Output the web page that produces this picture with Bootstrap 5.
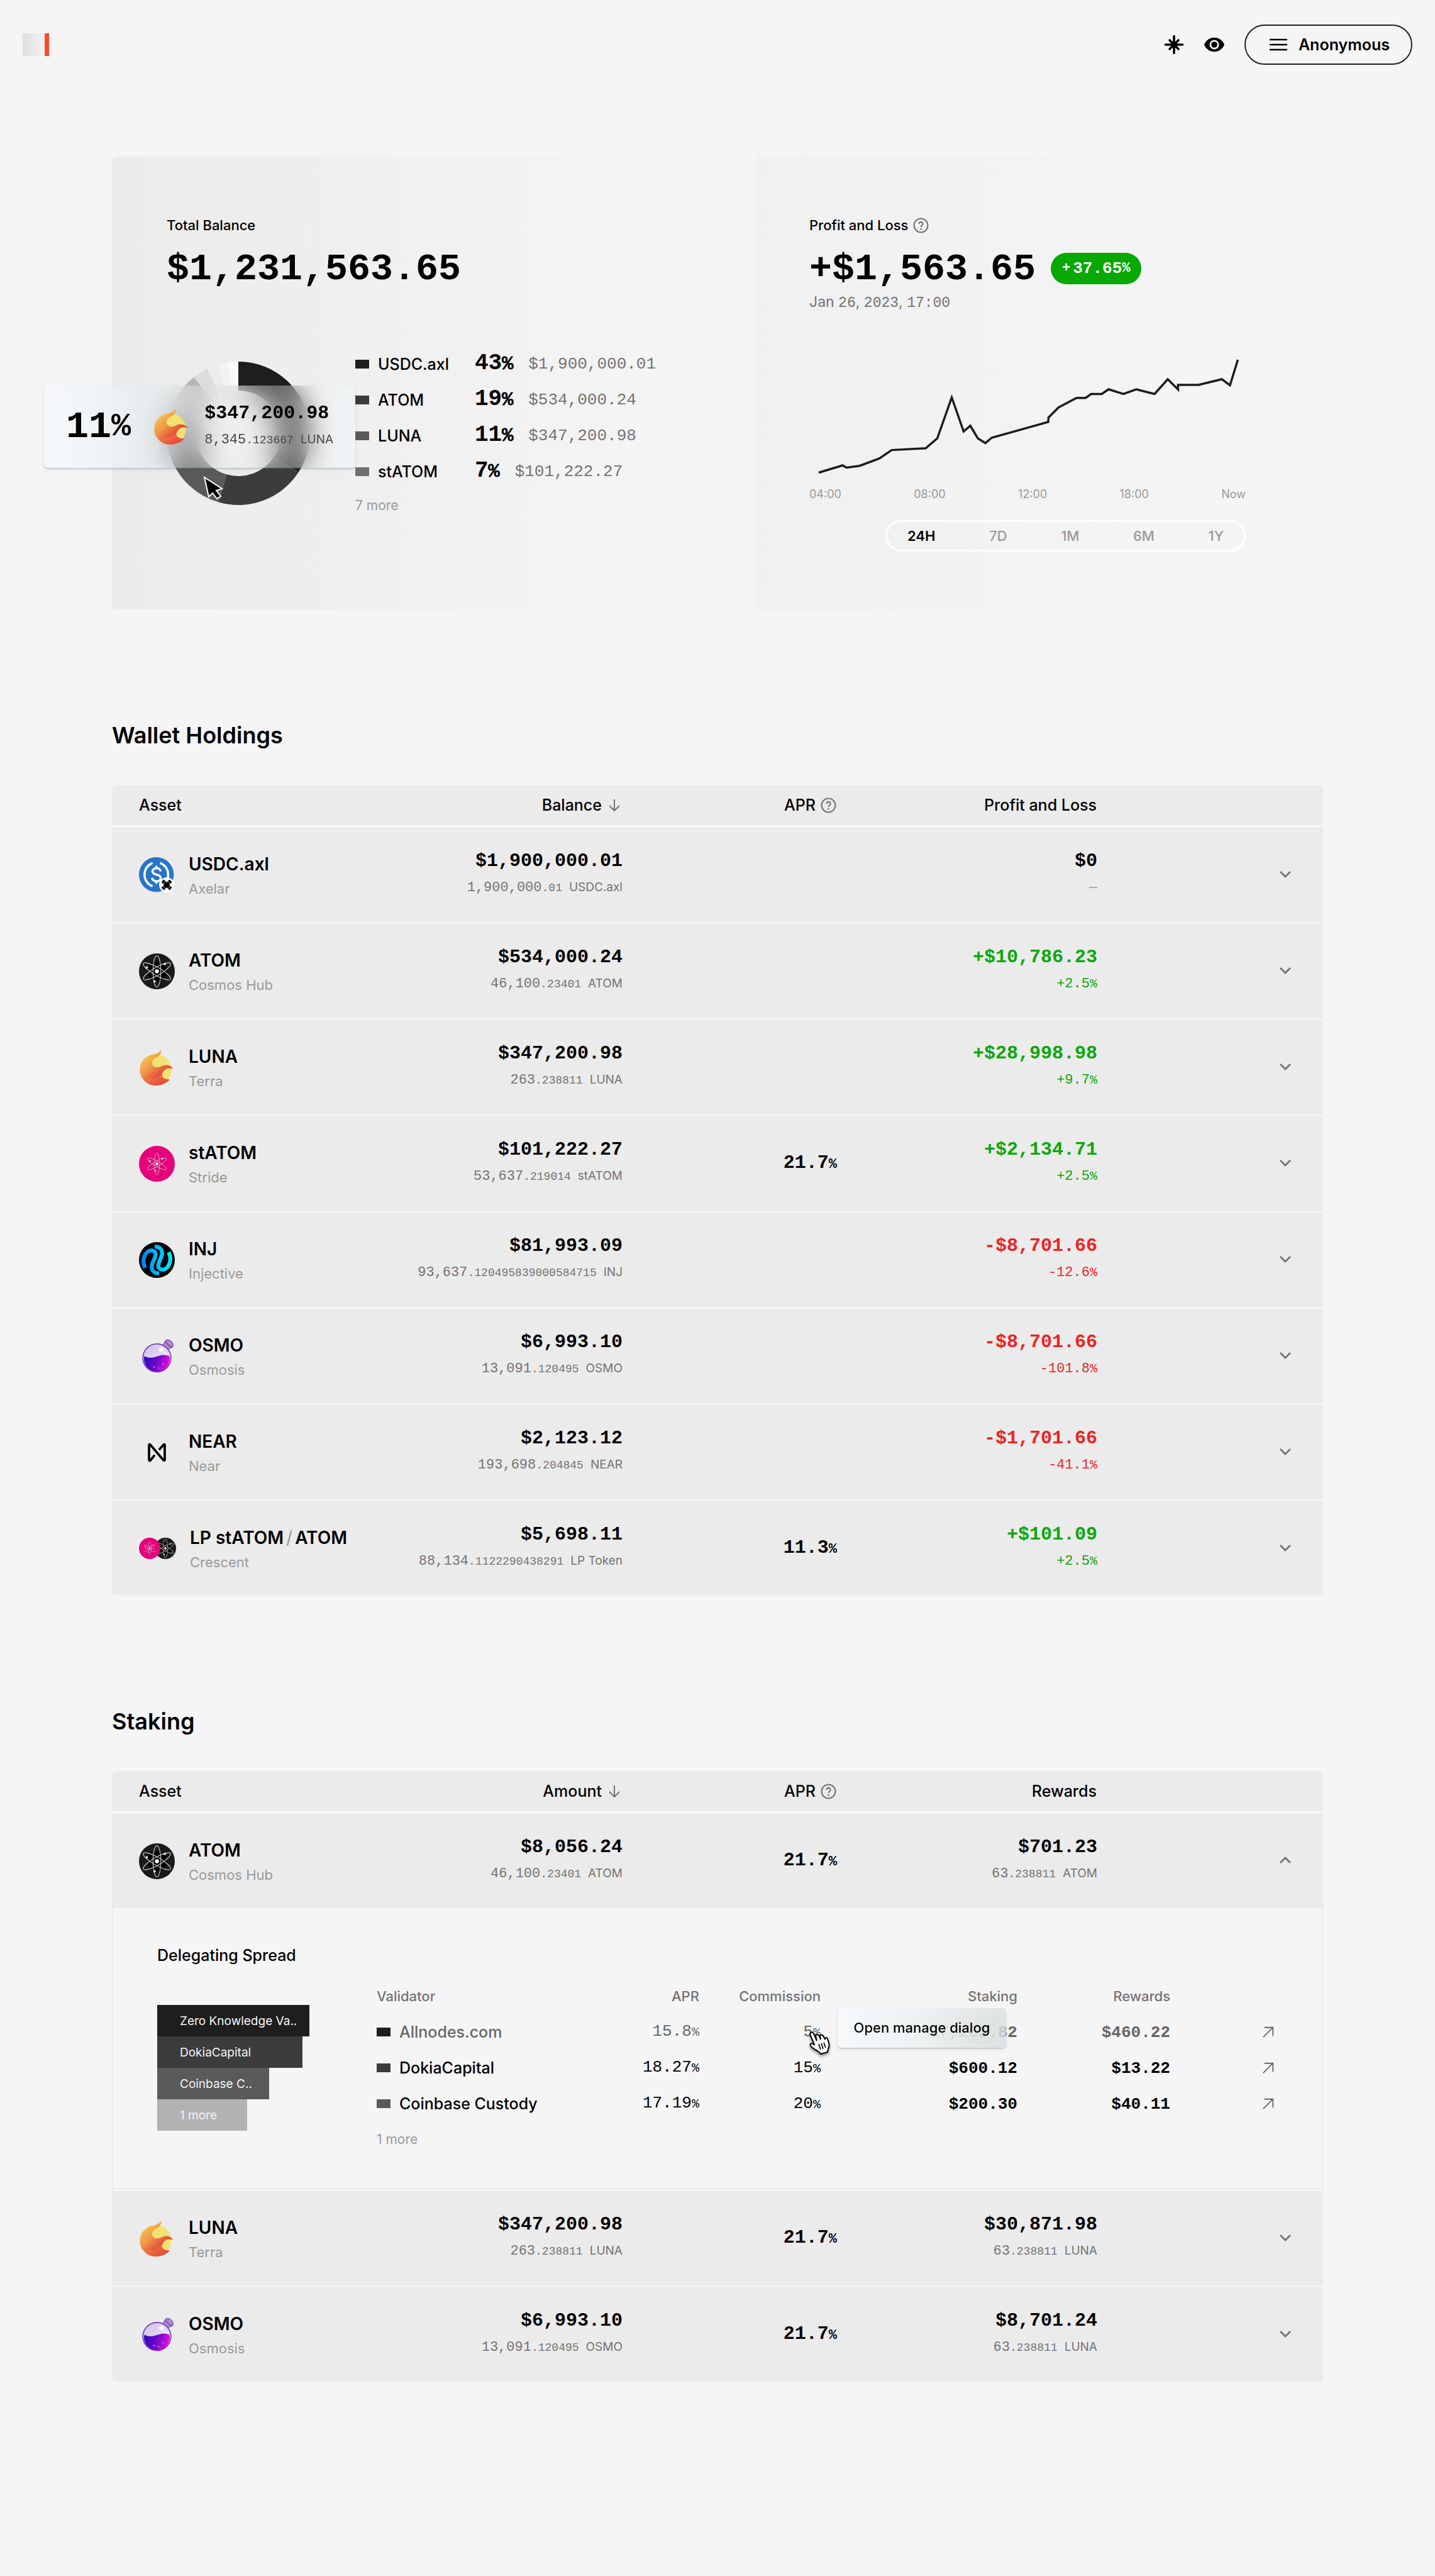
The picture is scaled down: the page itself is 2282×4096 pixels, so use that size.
<!DOCTYPE html>
<html lang="en">
<head>
<meta charset="utf-8">
<meta name="viewport" content="width=device-width, initial-scale=1">
<title>Portfolio</title>
<link href="https://cdn.jsdelivr.net/npm/bootstrap@5.3.0/dist/css/bootstrap.min.css" rel="stylesheet">
<style>
body{background:#f5f5f5;color:#000;font-family:Inter,"Liberation Sans",sans-serif;font-size:25px;line-height:36px}
svg{display:block;flex:none}
.num{font-family:"Liberation Mono",monospace;white-space:nowrap}
.t22{font-size:22px}.t26{font-size:26px}
.dim{color:#737373}.faint{color:#999}
.up{color:#0aa80a}.down{color:#ee2323}
.topbar{padding:39px 36px}
.brand-mark{width:42px;height:36px;background:linear-gradient(90deg,#dedede,#f2f2f2 80%,#f5f5f5 35px,#ff4a26 35px)}
.tool-btn{border:0;background:none;padding:0}
.tools{gap:32px}
.account{height:64px;border:2px solid #222;border-radius:32px;background:none;padding:0 34px 0 36px;font-size:25px;font-weight:600;gap:16px}
.page{padding:0 178px 300px}
.summary{display:grid;grid-template-columns:minmax(0,1fr) minmax(0,1fr);gap:122px;margin-top:107px}
.panel-box{min-height:720px;border-radius:7px;padding:93px 0 0 87px}
.panel-a{background:linear-gradient(90deg,#ebebeb,#f5f5f5)}
.panel-b{background:linear-gradient(90deg,#f0f0f0,#f5f5f5 87%);padding-right:123px;padding-left:85px}
.box-label{font-size:22px;line-height:32px;font-weight:500}
.big-num{font-size:60px;line-height:68px;font-weight:700}
.big-row{margin-top:20px}
.split{gap:72px;margin-top:88px}
.donut{width:228px;height:228px;margin-top:25px}
.legend-row{height:57px}
.swatch{display:inline-block;width:22px;height:14px;flex:none;margin-right:14px}
.c1{background:#1e1e1e}.c2{background:#3c3c3c}.c3{background:#5a5a5a}.c4{background:#6f6f6f}.c5{background:#b2b2b2}
.legend-name{width:154px;font-weight:500}
.legend-pct{font-size:36px;font-weight:700;margin-right:24px}
.legend-pct small{font-size:30px;font-weight:400;-webkit-text-stroke:1px #000}
.glass{position:absolute;background:linear-gradient(90deg,rgba(246,249,252,.75),rgba(228,236,240,.5) 33%,rgba(240,244,247,.22) 50%,rgba(240,244,247,.3) 82%,rgba(240,244,247,.75));backdrop-filter:blur(24px);border-radius:7px;box-shadow:0 2px 2px rgba(100,110,115,.28),0 4px 10px rgba(0,0,0,.05)}
.tip-asset{left:-195px;top:38px;width:495px;height:131px;padding:0 35px;gap:36px;z-index:2}
.tip-amount{margin-left:-12px}
.tip-amount .sub{color:#444}
.tip-pct{font-size:60px;font-weight:700}
.tip-pct small{font-size:52px}
.cursor-a{position:absolute;left:58px;top:182px;z-index:3}
.gain{height:50px;border-radius:25px;background:#08a805;color:#fff;font-weight:700;font-size:26px;padding:0 18px;margin-bottom:2px}
.gain small{font-size:22px}
.pct{font-size:20px}
.chart{margin-top:63px;width:100%}
.axis{font-size:18px;line-height:30px;margin-top:8px}
.range{height:50px;width:573px;border:3px solid #fff;border-radius:25px;margin:26px 0 0 auto;padding:0 32px}
.range button{border:0;background:none;padding:0;font-size:22px;font-weight:500;color:#999}
.range button.on{color:#000;font-weight:600}
.sec-title{font-size:36px;line-height:48px;font-weight:600;margin:176px 0 55px}
.ledger{width:100%;table-layout:fixed;border-collapse:separate;border-spacing:0;border-radius:7px;overflow:hidden}
.ledger>thead th{height:65px;background:#ebebeb;border-bottom:1px solid #f5f5f5;font-weight:500}
.ledger>tbody>tr>td{height:153px;background:#ebebeb;border-top:3px solid #f5f5f5;padding:0;vertical-align:middle}
.ledger>tbody>tr>td.spread{background:#f5f5f5;border:2px solid #ebebeb;border-top:0;height:auto}
.ledger>tbody>tr>td:first-child,.ledger>thead th:first-child{padding-left:43px}
.ledger>tbody>tr>td.spread{padding-left:0}
.ledger>tbody>tr>td.end-cell{padding-right:50px;text-align:right}
.asset{gap:22px}
.asset>div:last-child{padding-top:6px}
.asset b{display:block;font-size:28px;line-height:38px;font-weight:600;white-space:nowrap}
.asset span{display:block;font-size:22px;line-height:40px;color:#999}
.asset i{font-style:normal;font-weight:400;color:#999;margin:0 4px}
.val{font-size:30px;line-height:42px;font-weight:700}
.val .pct{font-size:22px}
.sub{font-size:22px;line-height:44px}
.sub small{font-size:18px}
.sub em{font:400 19px Inter,sans-serif;margin-left:11px}
.pair svg:first-child{margin-left:-9px}
.spread-in{padding:57px 75px 49px 70px}
.spread-title{font-weight:500}
.spread-row{margin-top:18px}
.bars{width:349px;padding-top:43px;flex:none}
.bar-item{height:50px;line-height:52px;font-size:19px;color:#f5f5f5;padding-left:36px}
.validators{width:100%;table-layout:fixed}
.validators th,.validators td{height:57px;padding:0;white-space:nowrap}
.validators th{font-size:22px;font-weight:500;color:#737373}
.validators td{font-weight:500}
.validators .num{font-size:26px;font-weight:400}
.validators .strong{font-weight:700}
.muted-row td{color:#666}
.tip-act{left:calc(100% + 27px);top:-9px;width:268px;height:63px;font:500 22px/62px Inter,sans-serif;color:#000;text-align:center;z-index:2;background:linear-gradient(90deg,rgba(246,249,252,.85),rgba(236,240,242,.7) 50%,rgba(214,218,220,.6))}
.cursor-b{position:absolute;right:-16px;top:27px;z-index:3;filter:drop-shadow(0 3px 2px rgba(0,0,0,.4))}
.more-link{text-decoration:none;font-size:21px}
</style>
<script src="https://cdn.jsdelivr.net/npm/bootstrap@5.3.0/dist/js/bootstrap.bundle.min.js"></script>
</head>
<body>
<svg width="0" height="0" class="position-absolute" aria-hidden="true">
<defs>
<linearGradient id="lg1" x1="0" y1="0" x2="1" y2="1"><stop offset="0.1" stop-color="#f8cf52"/><stop offset=".45" stop-color="#f0974a"/><stop offset=".8" stop-color="#e13a32"/></linearGradient>
<linearGradient id="lg2" x1="0" y1="0" x2="1" y2="1"><stop offset="0" stop-color="#f29a4e"/><stop offset="1" stop-color="#e33d33"/></linearGradient>
<linearGradient id="ig" gradientUnits="userSpaceOnUse" x1="4" y1="32" x2="60" y2="32"><stop offset="0" stop-color="#0080f8"/><stop offset="1" stop-color="#00f0ff"/></linearGradient>
<linearGradient id="og1" x1="0" y1="0" x2="1" y2="1"><stop offset="0" stop-color="#cdbfe6"/><stop offset="1" stop-color="#f3eefa"/></linearGradient>
<linearGradient id="og2" x1="0" y1="0" x2="1" y2="0.2"><stop offset="0" stop-color="#2c0bb8"/><stop offset=".5" stop-color="#6208c8"/><stop offset="1" stop-color="#e00bd8"/></linearGradient>
<symbol id="orbits" viewBox="-32 -32 64 64"><g fill="none" stroke="#ccc" stroke-width="1.3"><ellipse rx="7" ry="28"/><ellipse rx="7" ry="28" transform="rotate(60)"/><ellipse rx="7" ry="28" transform="rotate(-60)"/></g><circle r="3.6" fill="#fff"/><circle cx="14" cy="-13" r="2" fill="#fff"/><circle cx="-18" cy="-7" r="2" fill="#fff"/><circle cx="-4" cy="18" r="2" fill="#fff"/></symbol>
<symbol id="atom" viewBox="0 0 64 64"><circle cx="32" cy="32" r="32" fill="#1a1a1a"/><circle cx="32" cy="32" r="18" fill="#000"/><use href="#orbits" width="64" height="64"/></symbol>
<symbol id="statom" viewBox="0 0 64 64"><circle cx="32" cy="32" r="32" fill="#e6007a"/><use href="#orbits" x="10" y="10" width="44" height="44"/></symbol>
<symbol id="luna" viewBox="0 0 64 64"><circle cx="30" cy="36" r="28" fill="#f3e271"/><path fill="url(#lg2)" d="M4 47C14 57 28 55 36 47C40 42 42 38 48 35C38 41 38 54 55 53C49 61 38 64 30 64C18 64 9 58 4 47Z"/><path fill="url(#lg1)" d="M39.6 0C41 7 36 12 31 14C22 18 21 27 28 31C36 34 41 27 49 27.500C55 28 59 31 61 34C52 32 47 34 43 39C36 50 24 58 6 51C1 45 0 33 4 24C9 13 20 9 28 8C34 6 38 4 39.6 0Z"/></symbol>
<symbol id="usdc" viewBox="0 0 66 66"><circle cx="32" cy="32" r="32" fill="#2775ca"/><g fill="none" stroke="#fff" stroke-width="4"><path d="M25 10.500A23 23 0 0 0 25 53.500M39 10.500A23 23 0 0 1 39 53.500"/><path d="M40 26C39 18.500 25 18.500 25 26C25 34 40 30 40 38.500C40 46.500 25 46 24 38M32 15.500V20M32 44.500V49"/></g><circle cx="51" cy="51" r="14" fill="#fff"/><path d="M43.500 43.500L58.500 58.500M58.500 43.500L43.500 58.500" stroke="#000" stroke-width="6.500"/><path d="M42 51L51 42L60 51L51 60Z" fill="none" stroke="#fff" stroke-width=".8"/></symbol>
<symbol id="inj" viewBox="0 0 64 64"><circle cx="32" cy="32" r="32" fill="#000"/><g fill="none" stroke="url(#ig)" stroke-width="7"><path d="M11 46C3 30 13 13 24 15C35 18 27 30 24 38C20 49 26 56 36 56"/><path d="M53 18C61 34 51 51 40 49C29 46 37 34 40 26C44 15 38 8 28 8"/></g></symbol>
<symbol id="osmo" viewBox="0 0 64 64"><path d="M43 12L48 4C53 0 62 8 61 14C58 18 55 18 52 19Z" fill="#b48fd2" stroke="#7e4bb2" stroke-width="1.500"/><path d="M47 5C50 10 55 15 60 16" fill="none" stroke="#7e4bb2" stroke-width="2"/><circle cx="32" cy="35" r="25" fill="url(#og1)" stroke="#7b3fc0" stroke-width="2"/><path d="M9.500 32C18 36 24 35 33 32C41 29 48 29 54.500 32A23 23 0 1 1 9.500 32Z" fill="url(#og2)"/><ellipse cx="40" cy="20" rx="4" ry="4" fill="#fff"/><circle cx="46" cy="26" r="1.500" fill="#fff"/><g fill="#a050f0"><circle cx="27" cy="51" r="2"/><circle cx="35" cy="53" r="1.500"/><circle cx="43" cy="46" r="2"/><circle cx="38" cy="55" r="1"/></g></symbol>
<symbol id="near" viewBox="0 0 64 64"><path d="M27 38L20.500 46Q18 48 18 44.500V19.500Q18 16 20.500 18.500L43.500 45.500Q46 48 46 44.500V19.500Q46 16 43.500 18.500L37 26" fill="none" stroke="#000" stroke-width="4.200" stroke-linecap="round"/></symbol>
<symbol id="help" viewBox="0 0 24 24"><g fill="none" stroke="#737373" stroke-width="2"><circle cx="12" cy="12" r="10.500"/><path d="M9 9.600C9 5.500 15.200 5.800 15 9.600C14.800 11.800 12 12 12 14.500"/></g><circle cx="12" cy="17.500" r="1.300" fill="#737373"/></symbol>
<symbol id="sort" viewBox="0 0 24 24"><path d="M12 3V21M4 13L12 21L20 13" fill="none" stroke="#737373" stroke-width="2"/></symbol>
<symbol id="chev" viewBox="0 0 20 20"><path d="M2 6L10 14L18 6" fill="none" stroke="#737373" stroke-width="2.800"/></symbol>
<symbol id="out" viewBox="0 0 22 22"><path d="M2 20L19 3M4 3H19V18" fill="none" stroke="#666" stroke-width="2"/></symbol>
</defs>
</svg>

<header class="topbar d-flex align-items-center justify-content-between">
  <a href="#" aria-label="Home" class="brand-mark d-block"></a>
  <div class="tools d-flex align-items-center">
    <button class="tool-btn" aria-label="Theme"><svg width="32" height="32" viewBox="-16 -16 32 32"><path d="M0-13.500V13.500M-13.500 0H13.500M-7-7L7 7M7-7L-7 7" stroke="#000" stroke-width="3.600" stroke-linecap="round"/><circle r="5.500"/></svg></button>
    <button class="tool-btn" aria-label="Visibility"><svg width="32" height="32" viewBox="-16 -16 32 32"><path d="M-16 0C-10-15 10-15 16 0C10 15-10 15-16 0Z"/><circle r="7.500" fill="#f5f5f5"/><circle r="4.800"/></svg></button>
    <button class="account d-flex align-items-center"><svg width="32" height="24" viewBox="0 0 32 24"><path d="M2 4H30M2 12H30M2 20H30" stroke="#000" stroke-width="2.700"/></svg>Anonymous</button>
  </div>
</header>

<main class="page">
  <section class="summary">
    <div class="panel-box panel-a">
      <div class="box-label">Total Balance</div>
      <div class="big-num num big-row">$1,231,563.65</div>
      <div class="split d-flex">
        <div class="donut position-relative flex-shrink-0">
          <svg width="228" height="228" viewBox="-114 -114 228 228" id="ring"></svg>
          <div class="glass tip-asset d-flex align-items-center">
            <div class="tip-pct num d-flex align-items-center">11<small>%</small></div>
            <svg width="57" height="57"><use href="#luna"/></svg>
            <div class="tip-amount"><div class="val num">$347,200.98</div><div class="sub num">8,345<small>.123667</small><em>LUNA</em></div></div>
          </div>
          <svg class="cursor-a" width="32" height="38" viewBox="0 0 32 38"><path d="M2 2L9 33L15 27L22 36L28 32L21 23L30 20Z" fill="#000" stroke="#fff" stroke-width="2"/></svg>
        </div>
        <div>
          <div class="legend-row d-flex align-items-center"><span class="swatch c1"></span><span class="legend-name">USDC.axl</span><span class="legend-pct num">43<small>%</small></span><span class="num t26 dim">$1,900,000.01</span></div>
          <div class="legend-row d-flex align-items-center"><span class="swatch c2"></span><span class="legend-name">ATOM</span><span class="legend-pct num">19<small>%</small></span><span class="num t26 dim">$534,000.24</span></div>
          <div class="legend-row d-flex align-items-center"><span class="swatch c3"></span><span class="legend-name">LUNA</span><span class="legend-pct num">11<small>%</small></span><span class="num t26 dim">$347,200.98</span></div>
          <div class="legend-row d-flex align-items-center"><span class="swatch c4"></span><span class="legend-name">stATOM</span><span class="legend-pct num">7<small>%</small></span><span class="num t26 dim">$101,222.27</span></div>
          <a href="#" class="more-link faint d-block mt-2">7 more</a>
        </div>
      </div>
    </div>

    <div class="panel-box panel-b">
      <div class="box-label d-flex align-items-center gap-2">Profit and Loss <svg width="25" height="25"><use href="#help"/></svg></div>
      <div class="d-flex align-items-center gap-4 big-row"><span class="big-num num">+$1,563.65</span><span class="gain num d-flex align-items-center"><small class="me-1">+</small>37.65<small>%</small></span></div>
      <div class="dim" style="font-size:23px;line-height:36px">Jan <span class="num">26</span>, <span class="num">2023</span>, <span class="num">17:00</span></div>
      <svg class="chart" height="200" viewBox="0 0 694 200"><polyline fill="none" stroke="#1c1c1c" stroke-width="3.500" points="15,188.500 53,177 59,180.500 80,177.700 111.500,166 131,152.600 185,149.800 203.500,134 226.500,69 245.400,123 256,114 268,134 280,141.500 290,133 380,108 380.300,101 396.500,84.700 425,69.700 439.400,69.700 448,63.500 465,63.500 476,56 499.500,63.500 520,56 549,63.500 570,40 586.400,56.200 586.400,49 619,49 656,40 669,49.700 681.500,9"/></svg>
      <div class="axis faint d-flex justify-content-between"><span>04:00</span><span>08:00</span><span>12:00</span><span>18:00</span><span>Now</span></div>
      <div class="range d-flex align-items-center justify-content-between"><button class="on">24H</button><button>7D</button><button>1M</button><button>6M</button><button>1Y</button></div>
    </div>
  </section>

  <h2 class="sec-title">Wallet Holdings</h2>
  <table class="ledger">
    <colgroup><col style="width:20%"><col style="width:22.16%"><col style="width:17.7%"><col style="width:21.5%"><col></colgroup>
    <thead><tr>
      <th>Asset</th>
      <th><div class="d-flex align-items-center justify-content-end gap-2">Balance <svg width="24" height="24"><use href="#sort"/></svg></div></th>
      <th><div class="d-flex align-items-center justify-content-end gap-2">APR <svg width="25" height="25"><use href="#help"/></svg></div></th>
      <th class="text-end">Profit and Loss</th><th></th>
    </tr></thead>
    <tbody>
      <tr><td><div class="asset d-flex align-items-center"><svg width="57" height="57"><use href="#usdc"/></svg><div><b>USDC.axl</b><span>Axelar</span></div></div></td>
        <td class="text-end"><div class="val num">$1,900,000.01</div><div class="sub num dim">1,900,000<small>.01</small><em>USDC.axl</em></div></td><td></td>
        <td class="text-end"><div class="val num">$0</div><div class="sub num faint">—</div></td>
        <td class="end-cell"><button class="tool-btn" aria-label="Expand"><svg width="20" height="20"><use href="#chev"/></svg></button></td></tr>
      <tr><td><div class="asset d-flex align-items-center"><svg width="57" height="57"><use href="#atom"/></svg><div><b>ATOM</b><span>Cosmos Hub</span></div></div></td>
        <td class="text-end"><div class="val num">$534,000.24</div><div class="sub num dim">46,100<small>.23401</small><em>ATOM</em></div></td><td></td>
        <td class="text-end up"><div class="val num">+$10,786.23</div><div class="sub num">+2.5<span class="pct">%</span></div></td>
        <td class="end-cell"><button class="tool-btn" aria-label="Expand"><svg width="20" height="20"><use href="#chev"/></svg></button></td></tr>
      <tr><td><div class="asset d-flex align-items-center"><svg width="57" height="57"><use href="#luna"/></svg><div><b>LUNA</b><span>Terra</span></div></div></td>
        <td class="text-end"><div class="val num">$347,200.98</div><div class="sub num dim">263<small>.238811</small><em>LUNA</em></div></td><td></td>
        <td class="text-end up"><div class="val num">+$28,998.98</div><div class="sub num">+9.7<span class="pct">%</span></div></td>
        <td class="end-cell"><button class="tool-btn" aria-label="Expand"><svg width="20" height="20"><use href="#chev"/></svg></button></td></tr>
      <tr><td><div class="asset d-flex align-items-center"><svg width="57" height="57"><use href="#statom"/></svg><div><b>stATOM</b><span>Stride</span></div></div></td>
        <td class="text-end"><div class="val num">$101,222.27</div><div class="sub num dim">53,637<small>.219014</small><em>stATOM</em></div></td>
        <td class="text-end"><div class="val num">21.7<span class="pct">%</span></div></td>
        <td class="text-end up"><div class="val num">+$2,134.71</div><div class="sub num">+2.5<span class="pct">%</span></div></td>
        <td class="end-cell"><button class="tool-btn" aria-label="Expand"><svg width="20" height="20"><use href="#chev"/></svg></button></td></tr>
      <tr><td><div class="asset d-flex align-items-center"><svg width="57" height="57"><use href="#inj"/></svg><div><b>INJ</b><span>Injective</span></div></div></td>
        <td class="text-end"><div class="val num">$81,993.09</div><div class="sub num dim">93,637<small>.120495839000584715</small><em>INJ</em></div></td><td></td>
        <td class="text-end down"><div class="val num">-$8,701.66</div><div class="sub num">-12.6<span class="pct">%</span></div></td>
        <td class="end-cell"><button class="tool-btn" aria-label="Expand"><svg width="20" height="20"><use href="#chev"/></svg></button></td></tr>
      <tr><td><div class="asset d-flex align-items-center"><svg width="57" height="57"><use href="#osmo"/></svg><div><b>OSMO</b><span>Osmosis</span></div></div></td>
        <td class="text-end"><div class="val num">$6,993.10</div><div class="sub num dim">13,091<small>.120495</small><em>OSMO</em></div></td><td></td>
        <td class="text-end down"><div class="val num">-$8,701.66</div><div class="sub num">-101.8<span class="pct">%</span></div></td>
        <td class="end-cell"><button class="tool-btn" aria-label="Expand"><svg width="20" height="20"><use href="#chev"/></svg></button></td></tr>
      <tr><td><div class="asset d-flex align-items-center"><svg width="57" height="57"><use href="#near"/></svg><div><b>NEAR</b><span>Near</span></div></div></td>
        <td class="text-end"><div class="val num">$2,123.12</div><div class="sub num dim">193,698<small>.204845</small><em>NEAR</em></div></td><td></td>
        <td class="text-end down"><div class="val num">-$1,701.66</div><div class="sub num">-41.1<span class="pct">%</span></div></td>
        <td class="end-cell"><button class="tool-btn" aria-label="Expand"><svg width="20" height="20"><use href="#chev"/></svg></button></td></tr>
      <tr><td><div class="asset d-flex align-items-center"><div class="pair d-flex flex-row-reverse justify-content-end"><svg width="34" height="34"><use href="#atom"/></svg><svg width="34" height="34" class="position-relative"><use href="#statom"/></svg></div><div><b>LP stATOM<i>/</i>ATOM</b><span>Crescent</span></div></div></td>
        <td class="text-end"><div class="val num">$5,698.11</div><div class="sub num dim">88,134<small>.1122290438291</small><em>LP Token</em></div></td>
        <td class="text-end"><div class="val num">11.3<span class="pct">%</span></div></td>
        <td class="text-end up"><div class="val num">+$101.09</div><div class="sub num">+2.5<span class="pct">%</span></div></td>
        <td class="end-cell"><button class="tool-btn" aria-label="Expand"><svg width="20" height="20"><use href="#chev"/></svg></button></td></tr>
    </tbody>
  </table>

  <h2 class="sec-title">Staking</h2>
  <table class="ledger">
    <colgroup><col style="width:20%"><col style="width:22.16%"><col style="width:17.7%"><col style="width:21.5%"><col></colgroup>
    <thead><tr>
      <th>Asset</th>
      <th><div class="d-flex align-items-center justify-content-end gap-2">Amount <svg width="24" height="24"><use href="#sort"/></svg></div></th>
      <th><div class="d-flex align-items-center justify-content-end gap-2">APR <svg width="25" height="25"><use href="#help"/></svg></div></th>
      <th class="text-end">Rewards</th><th></th>
    </tr></thead>
    <tbody>
      <tr><td><div class="asset d-flex align-items-center"><svg width="57" height="57"><use href="#atom"/></svg><div><b>ATOM</b><span>Cosmos Hub</span></div></div></td>
        <td class="text-end"><div class="val num">$8,056.24</div><div class="sub num dim">46,100<small>.23401</small><em>ATOM</em></div></td>
        <td class="text-end"><div class="val num">21.7<span class="pct">%</span></div></td>
        <td class="text-end"><div class="val num">$701.23</div><div class="sub num dim">63<small>.238811</small><em>ATOM</em></div></td>
        <td class="end-cell"><button class="tool-btn" aria-label="Collapse"><svg width="20" height="20" viewBox="0 0 20 20"><path d="M2 14L10 6L18 14" fill="none" stroke="#737373" stroke-width="2.800"/></svg></button></td></tr>
      <tr><td colspan="5" class="spread"><div class="spread-in">
        <div class="spread-title">Delegating Spread</div>
        <div class="spread-row d-flex">
          <div class="bars">
            <div class="bar-item c1" style="width:242px">Zero Knowledge Va..</div>
            <div class="bar-item c2" style="width:231px">DokiaCapital</div>
            <div class="bar-item c3" style="width:178px">Coinbase C..</div>
            <div class="bar-item c5" style="width:143px">1 more</div>
          </div>
          <div class="flex-grow-1">
            <table class="validators">
              <colgroup><col style="width:35.92%"><col style="width:13.52%"><col style="width:21.92%"><col style="width:17.02%"><col></colgroup>
              <thead><tr><th>
                <div class="d-flex justify-content-between"><span>Validator</span><span>APR</span></div></th><th class="text-end">Commission</th><th class="text-end">Staking</th><th class="text-end">Rewards</th><th></th></tr></thead>
              <tbody>
                <tr class="muted-row"><td><div class="d-flex align-items-center"><span class="swatch c1"></span>Allnodes.com<span class="num ms-auto">15.8<span class="pct">%</span></span></div></td>
                  <td class="text-end position-relative"><span class="num">5<span class="pct">%</span></span><div class="glass tip-act" role="tooltip">Open manage dialog</div>
                  <svg class="cursor-b" width="36" height="40" viewBox="0 0 36 40"><path d="M4 3C7 1 9 4 10 7L14 16L12 8C13 5 17 6 18 9L20 14L19 8C21 5 24 7 25 10L27 14C27 10 30 10 31 13C33 19 35 23 32 29L31 34L20 37C17 31 8 30 4 24C2 20 6 19 9 22L10 22L4 8C3 6 3 4 4 3Z" fill="#fff" stroke="#000" stroke-width="2"/><path d="M17 21L20 30M21 20L24 29M25 19L28 27" stroke="#000" stroke-width="1.800"/></svg></td>
                  <td class="text-end"><span class="num strong">$7,255.82</span></td><td class="text-end"><span class="num strong">$460.22</span></td><td><a href="#" aria-label="Open" class="d-flex justify-content-end"><svg width="20" height="20"><use href="#out"/></svg></a></td></tr>
                <tr><td><div class="d-flex align-items-center"><span class="swatch c2"></span>DokiaCapital<span class="num ms-auto">18.27<span class="pct">%</span></span></div></td>
                  <td class="text-end"><span class="num">15<span class="pct">%</span></span></td><td class="text-end"><span class="num strong">$600.12</span></td><td class="text-end"><span class="num strong">$13.22</span></td><td><a href="#" aria-label="Open" class="d-flex justify-content-end"><svg width="20" height="20"><use href="#out"/></svg></a></td></tr>
                <tr><td><div class="d-flex align-items-center"><span class="swatch c3"></span>Coinbase Custody<span class="num ms-auto">17.19<span class="pct">%</span></span></div></td>
                  <td class="text-end"><span class="num">20<span class="pct">%</span></span></td><td class="text-end"><span class="num strong">$200.30</span></td><td class="text-end"><span class="num strong">$40.11</span></td><td><a href="#" aria-label="Open" class="d-flex justify-content-end"><svg width="20" height="20"><use href="#out"/></svg></a></td></tr>
              </tbody>
            </table>
            <a href="#" class="more-link faint d-block" style="line-height:57px">1 more</a>
          </div>
        </div>
      </div></td></tr>
      <tr><td><div class="asset d-flex align-items-center"><svg width="57" height="57"><use href="#luna"/></svg><div><b>LUNA</b><span>Terra</span></div></div></td>
        <td class="text-end"><div class="val num">$347,200.98</div><div class="sub num dim">263<small>.238811</small><em>LUNA</em></div></td>
        <td class="text-end"><div class="val num">21.7<span class="pct">%</span></div></td>
        <td class="text-end"><div class="val num">$30,871.98</div><div class="sub num dim">63<small>.238811</small><em>LUNA</em></div></td>
        <td class="end-cell"><button class="tool-btn" aria-label="Expand"><svg width="20" height="20"><use href="#chev"/></svg></button></td></tr>
      <tr><td><div class="asset d-flex align-items-center"><svg width="57" height="57"><use href="#osmo"/></svg><div><b>OSMO</b><span>Osmosis</span></div></div></td>
        <td class="text-end"><div class="val num">$6,993.10</div><div class="sub num dim">13,091<small>.120495</small><em>OSMO</em></div></td>
        <td class="text-end"><div class="val num">21.7<span class="pct">%</span></div></td>
        <td class="text-end"><div class="val num">$8,701.24</div><div class="sub num dim">63<small>.238811</small><em>LUNA</em></div></td>
        <td class="end-cell"><button class="tool-btn" aria-label="Expand"><svg width="20" height="20"><use href="#chev"/></svg></button></td></tr>
    </tbody>
  </table>
</main>
<script>
// Donut slices: start angle, end angle, colour (degrees clockwise from the top)
const slices=[[0,123,'#1e1e1e'],[123,196,'#3c3c3c'],[196,250,'#5a5a5a'],[250,285,'#6f6f6f'],[285,321.6,'#b6b6b6'],[321.6,334.2,'#dcdcdc'],[334.2,343.9,'#ebebeb'],[343.9,351.9,'#f3f3f3'],[351.9,360,'#fafafa']];
const R=114,r=68,at=(q,a)=>(q*Math.sin(a*Math.PI/180)).toFixed(2)+' '+(-q*Math.cos(a*Math.PI/180)).toFixed(2);
document.getElementById('ring').innerHTML=slices.map(([a,b,c])=>`<path fill="${c}" d="M${at(R,a)}A${R} ${R} 0 0 1 ${at(R,b)}L${at(r,b)}A${r} ${r} 0 0 0 ${at(r,a)}Z"/>`).join('');
</script>
</body>
</html>
